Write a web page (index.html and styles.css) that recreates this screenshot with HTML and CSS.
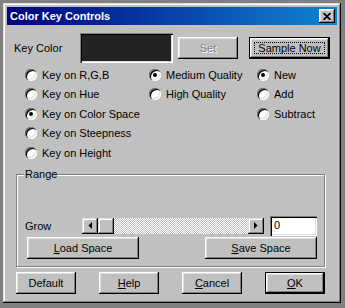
FILE: index.html
```html
<!DOCTYPE html>
<html lang="en">
<head>
  <meta charset="UTF-8">
  <meta name="viewport" content="width=device-width, initial-scale=1.0">
  <title>Color Key Controls</title>
  <link rel="stylesheet" href="styles.css">
</head>
<body>
  <div class="window">
    <div class="titlebar">
      <span class="title">Color Key Controls</span>
      <button class="close" aria-label="Close">
        <svg width="8" height="7" viewBox="0 0 8 7"><path d="M0.5 0L7.5 7M7.5 0L0.5 7" stroke="#000" stroke-width="1.7"/></svg>
      </button>
    </div>
    <div class="content">
      <div class="key-row">
        <span class="key-label">Key Color</span>
        <div class="swatch"></div>
        <button class="btn set" disabled>Set</button>
        <button class="btn sample default">Sample Now</button>
      </div>

      <div class="options">
        <div class="col col-key">
          <label class="radio-item"><span class="radio"></span>Key on R,G,B</label>
          <label class="radio-item"><span class="radio"></span>Key on Hue</label>
          <label class="radio-item"><span class="radio checked"></span>Key on Color Space</label>
          <label class="radio-item"><span class="radio"></span>Key on Steepness</label>
          <label class="radio-item"><span class="radio"></span>Key on Height</label>
        </div>
        <div class="col col-quality">
          <label class="radio-item"><span class="radio checked"></span>Medium Quality</label>
          <label class="radio-item"><span class="radio"></span>High Quality</label>
        </div>
        <div class="col">
          <label class="radio-item"><span class="radio checked"></span>New</label>
          <label class="radio-item"><span class="radio"></span>Add</label>
          <label class="radio-item"><span class="radio"></span>Subtract</label>
        </div>
      </div>

      <div class="group">
        <span class="legend">Range</span>
        <div class="grow-row">
          <span class="grow-label">Grow</span>
          <div class="scrollbar">
            <span class="arrow"><svg width="4" height="7" viewBox="0 0 4 7"><polygon points="4,0 4,7 0.5,3.5" fill="#000"/></svg></span>
            <span class="thumb"></span>
            <span class="track"></span>
            <span class="arrow"><svg width="4" height="7" viewBox="0 0 4 7"><polygon points="0,0 0,7 3.5,3.5" fill="#000"/></svg></span>
          </div>
          <div class="edit">0</div>
        </div>
        <div class="space-row">
          <button class="btn wide"><u>L</u>oad Space</button>
          <button class="btn wide"><u>S</u>ave Space</button>
        </div>
      </div>

      <div class="actions">
        <button class="btn">Default</button>
        <button class="btn"><u>H</u>elp</button>
        <button class="btn"><u>C</u>ancel</button>
        <button class="btn default"><u>O</u>K</button>
      </div>
    </div>
  </div>
</body>
</html>
```

FILE: styles.css
```css
body {
  margin: 0;
  background-color: #808080;
  font-family: "Liberation Sans", Arial, sans-serif;
  font-size: 11px;
  color: #000;
}
.window {
  margin: 3px;
  width: 338px;
  height: 300px;
  box-sizing: border-box;
  padding: 4px;
  background-color: #c0c0c0;
  box-shadow: inset -1px -1px #000, inset 1px 1px #dfdfdf, inset -2px -2px #808080, inset 2px 2px #fff;
}
.titlebar {
  height: 18px;
  display: flex;
  align-items: center;
  justify-content: space-between;
  padding: 0 2px 0 3px;
  background: linear-gradient(to right, #000080, #1084d0);
}
.title {
  color: #fff;
  font-weight: bold;
  font-size: 11px;
}
.close {
  width: 16px;
  height: 14px;
  padding: 0;
  border: none;
  display: flex;
  align-items: center;
  justify-content: center;
  background-color: #c0c0c0;
  box-shadow: inset -1px -1px #000, inset 1px 1px #fff, inset -2px -2px #808080, inset 2px 2px #dfdfdf;
}

.btn {
  position: relative;
  height: 22px;
  width: 60px;
  padding: 0;
  border: none;
  font-family: inherit;
  font-size: 11px;
  color: #000;
  background-color: #c0c0c0;
  box-shadow: inset -1px -1px #000, inset 1px 1px #fff, inset -2px -2px #808080, inset 2px 2px #dfdfdf;
}
.btn.default {
  border: 1px solid #000;
}
.btn:disabled {
  color: #808080;
  text-shadow: 1px 1px #fff;
}
.btn u {
  text-underline-offset: 1px;
}

.key-row {
  display: flex;
  align-items: center;
  height: 30px;
  margin-top: 8px;
  padding-left: 7px;
}
.key-label {
  width: 66px;
}
.swatch {
  width: 93px;
  height: 30px;
  background-color: #232323;
  box-shadow: inset 1px 1px #808080, inset 2px 2px #000, inset -1px -1px #fff, inset -2px -2px #dfdfdf;
}
.set {
  margin-left: 5px;
  width: 60px;
}
.sample {
  margin-left: 11px;
  width: 81px;
}
.sample::after {
  content: "";
  position: absolute;
  inset: 4px;
  border: 1px dotted #000;
}

.options {
  display: flex;
  margin-top: 2px;
  padding-left: 18px;
}
.col {
  display: flex;
  flex-direction: column;
}
.col-key {
  width: 124px;
}
.col-quality {
  width: 108px;
}
.radio-item {
  display: flex;
  align-items: center;
  gap: 5px;
  height: 19.5px;
  white-space: nowrap;
}
.radio {
  position: relative;
  width: 12px;
  height: 12px;
  border-radius: 50%;
  background-color: #fff;
  box-shadow: inset 1px 1px #808080, inset 2px 2px #000, inset -1px -1px #fff, inset -2px -2px #dfdfdf;
}
.radio.checked::after {
  content: "";
  position: absolute;
  left: 4px;
  top: 4px;
  width: 4px;
  height: 4px;
  border-radius: 50%;
  background-color: #000;
}

.group {
  position: relative;
  margin: 11px 0 0 9px;
  width: 309px;
  height: 93px;
  box-sizing: border-box;
  padding: 41px 7px 7px 8px;
  border: 1px solid #808080;
  box-shadow: 1px 1px #fff, inset 1px 1px #fff;
}
.legend {
  position: absolute;
  top: -7px;
  left: 7px;
  padding: 0 1px;
  line-height: 13px;
  background-color: #c0c0c0;
}
.grow-row {
  display: flex;
  align-items: center;
  height: 20px;
}
.grow-label {
  width: 57px;
}
.scrollbar {
  display: flex;
  width: 182px;
  height: 16px;
}
.arrow, .thumb {
  width: 16px;
  height: 16px;
  display: flex;
  align-items: center;
  justify-content: center;
  background-color: #c0c0c0;
  box-shadow: inset -1px -1px #000, inset 1px 1px #dfdfdf, inset -2px -2px #808080, inset 2px 2px #fff;
}
.track {
  flex: 1;
  background: repeating-conic-gradient(#c0c0c0 0 25%, #fff 0 50%) 0 0 / 2px 2px;
}
.edit {
  margin-left: 6px;
  width: 47px;
  height: 20px;
  box-sizing: border-box;
  padding: 3px 0 0 4px;
  background-color: #fff;
  box-shadow: inset 1px 1px #808080, inset 2px 2px #000, inset -1px -1px #fff, inset -2px -2px #dfdfdf;
}
.space-row {
  display: flex;
  justify-content: space-between;
  margin-top: 1px;
  padding-left: 2px;
}
.wide {
  width: 112px;
}

.actions {
  display: flex;
  justify-content: space-between;
  width: 309px;
  margin: 5px 0 0 9px;
}
```
